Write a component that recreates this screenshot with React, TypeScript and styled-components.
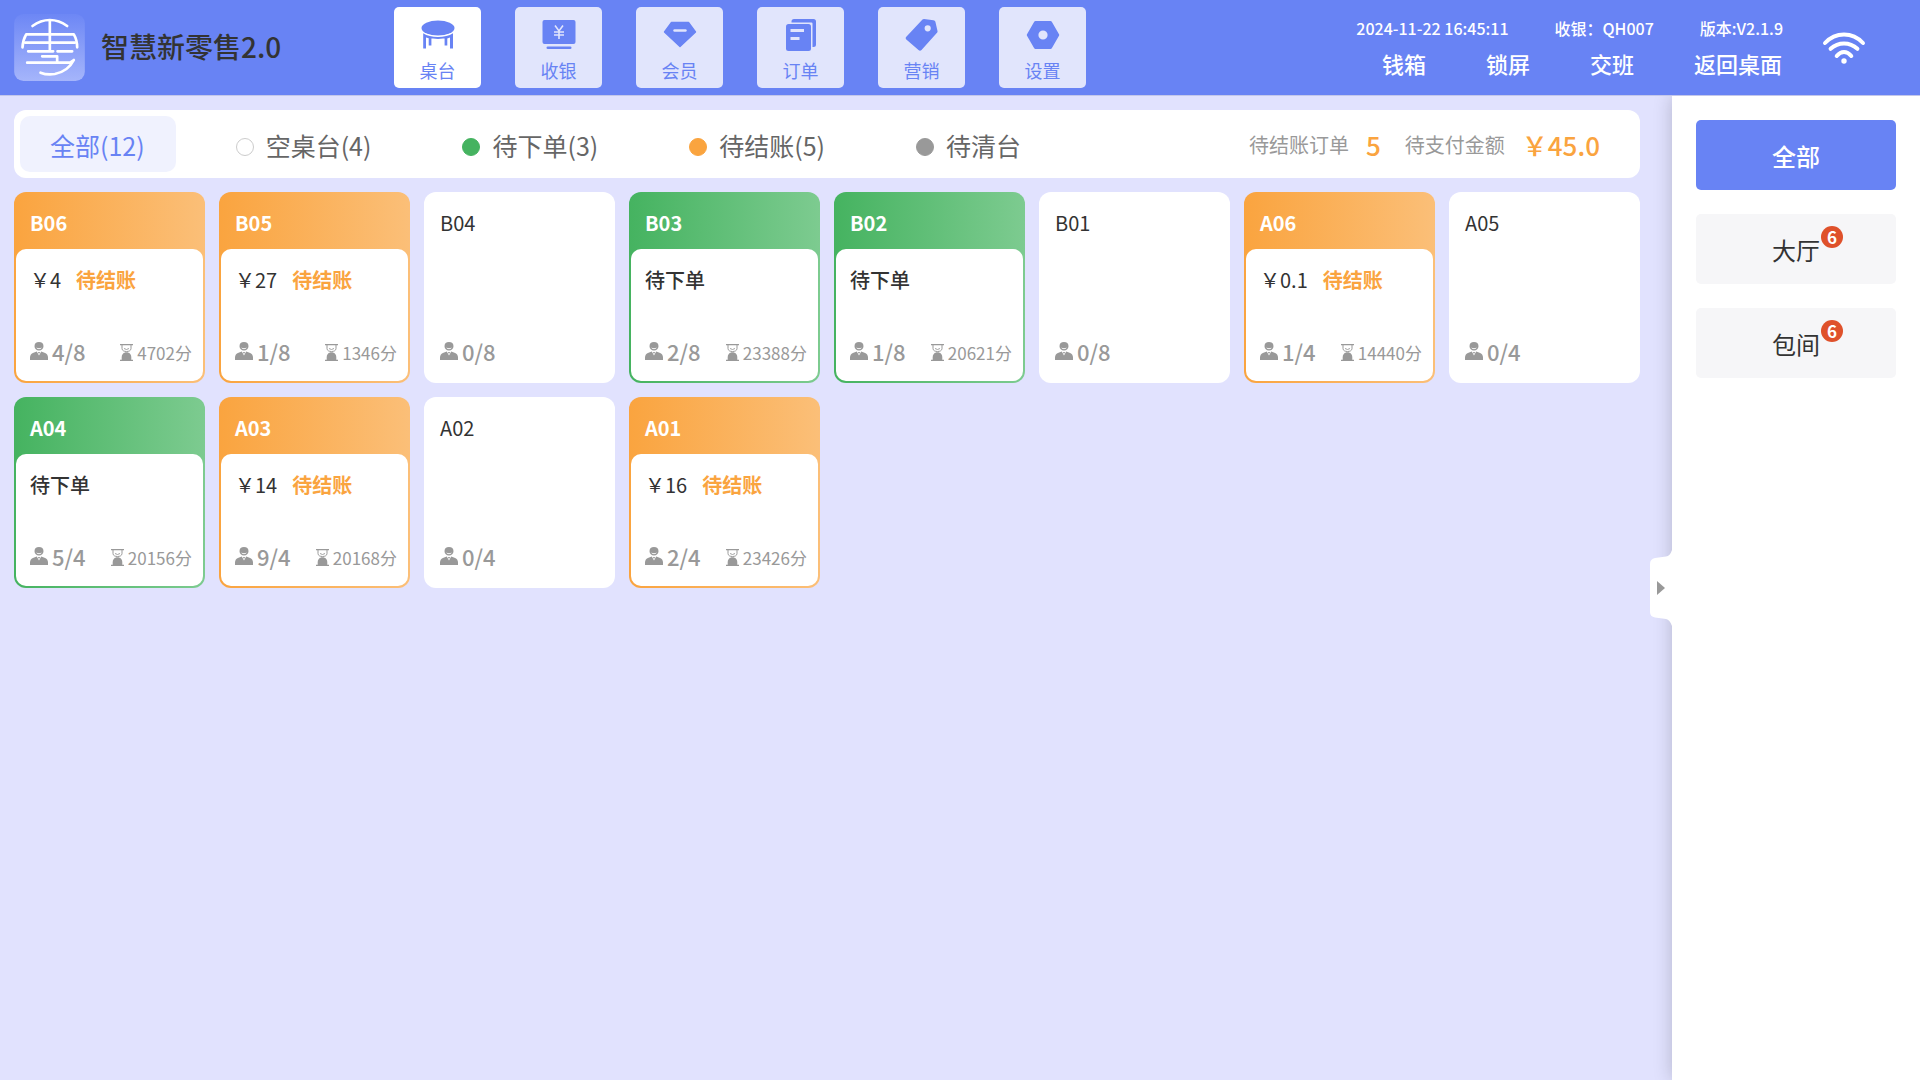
import React, { useState } from "react";
import styled, { createGlobalStyle } from "styled-components";

const color = {
  brand: "#6883f4",
  page: "#e1e2fe",
  navIdle: "#e1e5fc",
  orange: "#faa43f",
  green: "#45b360",
  gray: "#999999",
  text: "#333333",
};

const GlobalStyle = createGlobalStyle`
  *, *::before, *::after { box-sizing: border-box; }
  body {
    margin: 0;
    background: ${color.page};
    color: ${color.text};
    font-family: "Noto Sans CJK SC", "Noto Sans", sans-serif;
  }
  button {
    border: 0;
    padding: 0;
    background: none;
    color: inherit;
    font: inherit;
    cursor: pointer;
  }
  svg { display: block; flex: none; }
`;

const Page = styled.div`
  display: flex;
  flex-direction: column;
  min-height: 100vh;
`;

/* ---------- header ---------- */

const Header = styled.header`
  display: flex;
  align-items: center;
  height: 96px;
  padding: 0 54px 0 14px;
  background: ${color.brand};
  border-bottom: 1px solid #c3c7ea;
`;

const Brand = styled.div`
  display: flex;
  align-items: center;
  gap: 16px;
  flex: 0 0 380px;
`;

const BrandName = styled.h1`
  margin: 0;
  padding-bottom: 4px;
  font-size: 28px;
  line-height: 40px;
  font-weight: 500;
  white-space: nowrap;
`;

const Nav = styled.nav`
  display: flex;
  gap: 34px;
`;

const NavButton = styled.button<{ $active: boolean }>`
  display: flex;
  flex-direction: column;
  align-items: center;
  justify-content: space-between;
  width: 87px;
  height: 81px;
  padding: 10px 0 5px;
  border-radius: 5px;
  background: ${(p) => (p.$active ? "#ffffff" : color.navIdle)};
  color: ${color.brand};
  font-size: 18px;
  line-height: 26px;
`;

const Status = styled.div`
  display: flex;
  align-items: center;
  gap: 39px;
  margin-left: auto;
  color: #ffffff;
`;

const StatusLines = styled.div`
  display: flex;
  flex-direction: column;
  gap: 7px;
`;

const InfoLine = styled.div`
  display: flex;
  justify-content: flex-end;
  gap: 46px;
  font-size: 16px;
  line-height: 24px;
  font-weight: 500;
  white-space: nowrap;
`;

const ActionLine = styled.div`
  display: flex;
  justify-content: flex-end;
  gap: 60px;
  padding-right: 1px;
`;

const ActionButton = styled.button`
  font-size: 22px;
  line-height: 32px;
  font-weight: 500;
  white-space: nowrap;
`;

/* ---------- body ---------- */

const Body = styled.div`
  display: flex;
  flex: 1;
`;

const Main = styled.main`
  flex: 1;
  min-width: 0;
  padding: 14px 32px 14px 14px;
`;

const FilterBar = styled.div`
  display: flex;
  align-items: center;
  justify-content: space-between;
  min-height: 68px;
  padding: 6px 40px 6px 6px;
  border-radius: 12px;
  background: #ffffff;
`;

const Filters = styled.div`
  display: flex;
  gap: 30px;
`;

const FilterButton = styled.button<{ $active: boolean }>`
  display: flex;
  align-items: center;
  gap: 12px;
  height: 56px;
  padding: 1px 31px 0 30px;
  border-radius: 10px;
  background: ${(p) => (p.$active ? "#f0f2fe" : "transparent")};
  color: ${(p) => (p.$active ? color.brand : "#666666")};
  font-size: 25px;
  line-height: 36px;
  white-space: nowrap;
`;

const Dot = styled.span<{ $fill: string; $edge: string }>`
  width: 18px;
  height: 18px;
  margin-top: 4px;
  border: 1px solid ${(p) => p.$edge};
  border-radius: 50%;
  background: ${(p) => p.$fill};
`;

const Summary = styled.dl`
  display: flex;
  gap: 24px;
  margin: 0;
  padding-top: 2px;
  white-space: nowrap;
`;

const SummaryItem = styled.div`
  display: flex;
  align-items: center;
  gap: 17px;
`;

const SummaryLabel = styled.dt`
  color: ${color.gray};
  font-size: 20px;
  line-height: 36px;
`;

const SummaryValue = styled.dd`
  margin: 0;
  color: ${color.orange};
  font-size: 26px;
  line-height: 36px;
  font-weight: 500;
`;

/* ---------- table cards ---------- */

type State = "empty" | "ordering" | "paying";

const cardFill: Record<State, string> = {
  empty: "#ffffff",
  ordering: "linear-gradient(90deg, #45b360, #7dcb90)",
  paying: "linear-gradient(90deg, #faa43f, #fbbf78)",
};

const TableGrid = styled.div`
  display: grid;
  grid-template-columns: repeat(auto-fill, minmax(180px, 1fr));
  gap: 14px;
  margin-top: 14px;
`;

const Card = styled.button<{ $state: State }>`
  display: flex;
  flex-direction: column;
  aspect-ratio: 1;
  padding: 0 2px 2px;
  border-radius: 12px;
  background: ${(p) => cardFill[p.$state]};
  text-align: left;
  white-space: nowrap;
`;

const CardTitle = styled.span<{ $state: State }>`
  height: 57px;
  padding: 15px 14px 0;
  color: ${(p) => (p.$state === "empty" ? color.text : "#ffffff")};
  font-size: 20px;
  line-height: 32px;
  font-weight: ${(p) => (p.$state === "empty" ? 400 : 700)};
`;

const CardBody = styled.span`
  display: flex;
  flex: 1;
  flex-direction: column;
  justify-content: space-between;
  padding: 15px 11px 14px 14px;
  border-radius: 10px;
  background: #ffffff;
`;

const CardLine = styled.span`
  display: flex;
  gap: 15px;
  font-size: 20px;
  line-height: 32px;
`;

const Ordering = styled.span`
  font-weight: 500;
`;

const Unpaid = styled.span`
  color: ${color.orange};
  font-weight: 700;
`;

const CardFooter = styled.span`
  display: flex;
  align-items: center;
  justify-content: space-between;
  color: ${color.gray};
`;

const Seats = styled.span`
  display: flex;
  align-items: center;
  gap: 4px;
  font-size: 22px;
  line-height: 32px;
  font-weight: 500;
`;

const Duration = styled.span`
  display: flex;
  align-items: center;
  gap: 4px;
  padding-top: 3px;
  font-size: 17px;
  line-height: 29px;
`;

/* ---------- sidebar ---------- */

const Sidebar = styled.aside`
  position: relative;
  display: flex;
  flex-direction: column;
  gap: 24px;
  flex: 0 0 248px;
  padding: 24px;
  background: #ffffff;
  box-shadow: 0 0 18px rgba(0, 0, 0, 0.2);
  clip-path: inset(0 0 0 -40px);
`;

const AreaButton = styled.button<{ $active: boolean }>`
  height: 70px;
  padding-top: 2px;
  border-radius: 5px;
  background: ${(p) => (p.$active ? color.brand : "#f6f6f8")};
  color: ${(p) => (p.$active ? "#ffffff" : color.text)};
  font-size: 24px;
  line-height: 36px;
  font-weight: ${(p) => (p.$active ? 500 : 400)};
`;

const AreaLabel = styled.span`
  position: relative;
`;

const Badge = styled.span`
  position: absolute;
  left: calc(100% + 1px);
  top: -6px;
  width: 22px;
  height: 22px;
  border-radius: 50%;
  background: #df512b;
  color: #ffffff;
  font-size: 17px;
  line-height: 21px;
  font-weight: 700;
  text-align: center;
`;

const Handle = styled.button`
  position: absolute;
  right: 100%;
  top: 454px;
`;

/* ---------- drawings ---------- */

const Logo = () => (
  <svg width="71" height="67" viewBox="43 42 212 201" aria-hidden="true">
    <defs>
      <linearGradient id="logoFill" x1="0" y1="0" x2="0" y2="1">
        <stop offset="0" stopColor="#6d87f5" />
        <stop offset="1" stopColor="#a5b5fb" />
      </linearGradient>
    </defs>
    <rect x="43" y="42" width="212" height="201" rx="28" fill="url(#logoFill)" />
    <g fill="none" stroke="#fff" strokeWidth="8" strokeLinecap="round" strokeLinejoin="round">
      <path d="M98 78Q122 60 150 60T202 78" />
      <path d="M150 62V152" />
      <path d="M68 142Q69 120 79 103H222Q232 120 232 142" />
      <path d="M76 128H225" />
      <path d="M85 154H160M173 154H217" />
      <path d="M127 169H172V187" />
      <path d="M82 188H211L222 180Q205 214 165 222Q142 226 122 218" />
    </g>
  </svg>
);

const TableIcon = () => (
  <svg width="34" height="34" viewBox="0 0 34 34" fill="currentColor" aria-hidden="true">
    <ellipse cx="17" cy="11" rx="16.5" ry="7.5" />
    <path d="M2.2 16.2Q8 20 17 20T32 16.2V31.5H29V20.6Q27.5 21.2 26.3 21.4V28.5H23.6V21.4L22 21.6Q17 22.2 12 21.6L10.4 21.4V28.5H7.7V21.2L5 20.6V31.5H2.2Z" />
  </svg>
);

const CashierIcon = () => (
  <svg width="34" height="34" viewBox="0 0 34 34" aria-hidden="true">
    <rect x="0.5" y="3" width="33" height="24" rx="2" fill="currentColor" />
    <rect x="4.5" y="29.5" width="25" height="2.6" rx="1.3" fill="currentColor" />
    <path d="M13 8.5L17 14L21 8.5M12 15H22M12 18H22M17 14V22" fill="none" stroke="#e1e5fc" strokeWidth="1.6" />
  </svg>
);

const MemberIcon = () => (
  <svg width="34" height="34" viewBox="0 0 34 34" aria-hidden="true">
    <path
      d="M8.5 5.5H25.5L32.5 15L17 29.5L1.5 15Z"
      fill="currentColor"
      stroke="currentColor"
      strokeWidth="1.4"
      strokeLinejoin="round"
    />
    <path d="M11.5 13.5H22.5" stroke="#e1e5fc" strokeWidth="2.4" strokeLinecap="round" />
  </svg>
);

const OrderIcon = () => (
  <svg width="34" height="34" viewBox="0 0 34 34" aria-hidden="true">
    <path d="M7.5 4.5Q7.5 2 10 2H29.5Q32 2 32 4.5V27.5Q32 30 29.5 30H28.5V6.5Q28.5 5.5 27.5 5.5H7.5Z" fill="currentColor" />
    <rect x="2" y="7" width="25" height="27" rx="2.5" fill="currentColor" />
    <path d="M6.5 13.5H20M6.5 21.5H15.5" stroke="#e1e5fc" strokeWidth="3" />
  </svg>
);

const MarketingIcon = () => (
  <svg width="34" height="34" viewBox="0 0 34 34" aria-hidden="true">
    <path
      fillRule="evenodd"
      d="M17.5 2.5Q18 2 19 2L28.5 3.2Q30 3.4 30.4 4.8L32.5 14Q32.7 15 32 15.8L16.5 33Q15 34.5 13.5 33L1.3 22.5Q0 21 1.3 19.7ZM22.7 8.2A3.1 3.1 0 1 0 22.7 14.4A3.1 3.1 0 1 0 22.7 8.2Z"
      fill="currentColor"
    />
  </svg>
);

const SettingsIcon = () => (
  <svg width="34" height="34" viewBox="0 0 34 34" aria-hidden="true">
    <path
      fillRule="evenodd"
      d="M9.5 4H24.5Q25.3 4 25.8 4.8L33 17.2Q33.5 18 33 18.8L25.8 31.2Q25.3 32 24.5 32H9.5Q8.7 32 8.2 31.2L1 18.8Q0.5 18 1 17.2L8.2 4.8Q8.7 4 9.5 4ZM17 13.4A4.6 4.6 0 1 0 17 22.6A4.6 4.6 0 1 0 17 13.4Z"
      fill="currentColor"
    />
  </svg>
);

const WifiIcon = () => (
  <svg width="44" height="32" viewBox="0 0 44 32" fill="none" stroke="#fff" strokeWidth="4" strokeLinecap="round" aria-hidden="true">
    <path d="M3 11Q11 2.5 22 2.5T41 11" />
    <path d="M8.6 16.8Q14.5 11.5 22 11.5T35.4 16.8" />
    <path d="M14.7 24Q18 20 22 20T29.3 24" />
    <circle cx="22" cy="29" r="2.7" fill="#fff" stroke="none" />
  </svg>
);

const PersonIcon = () => (
  <svg width="18" height="18" viewBox="0 0 18 18" fill="currentColor" aria-hidden="true">
    <path
      d="M9 0A4.5 4.3 0 0 1 13.5 4.2C13.5 6.6 11.5 8.6 9 8.6S4.5 6.6 4.5 4.2A4.5 4.3 0 0 1 9 0ZM6.2 5.4Q7 7.2 9 7.2T11.8 5.4Q10.5 6.2 9 6.2T6.2 5.4Z"
      fillRule="evenodd"
    />
    <path d="M0 18V15.5Q0 12 3.5 10.7L6.8 9.5L9 13.5L11.2 9.5L14.5 10.7Q18 12 18 15.5V18Z" />
    <path d="M8 10H10L9.5 11.5H8.5Z" />
  </svg>
);

const HourglassIcon = () => (
  <svg width="13" height="17" viewBox="0 0 13 17" aria-hidden="true">
    <path d="M0 0.6H13M0 16.4H13" stroke="currentColor" strokeWidth="1.2" />
    <path d="M2 1V4.5C2 6.6 4 7.5 6.5 7.5S11 6.6 11 4.5V1" fill="none" stroke="currentColor" />
    <path d="M4 4.5Q6.5 6.5 9 4.5" fill="none" stroke="currentColor" strokeWidth="0.9" />
    <path d="M1.7 16V13.5C1.7 10.5 3.5 8.3 6.5 8.3S11.3 10.5 11.3 13.5V16Z" fill="currentColor" />
  </svg>
);

const HandleShape = () => (
  <svg width="22" height="76" viewBox="0 0 22 76" aria-hidden="true">
    <path d="M22 0Q20 6 16 6.5L5 8Q0 9 0 14V62Q0 66.5 5 67.5L16 69Q20 70 22 76Z" fill="#fff" />
    <path d="M7 31L15 38L7 45Z" fill="#999" />
  </svg>
);

/* ---------- data ---------- */

const navItems = [
  { label: "桌台", Icon: TableIcon },
  { label: "收银", Icon: CashierIcon },
  { label: "会员", Icon: MemberIcon },
  { label: "订单", Icon: OrderIcon },
  { label: "营销", Icon: MarketingIcon },
  { label: "设置", Icon: SettingsIcon },
];

const actions = ["钱箱", "锁屏", "交班", "返回桌面"];

const filters = [
  { label: "全部(12)" },
  { label: "空桌台(4)", fill: "#ffffff", edge: "#cccccc" },
  { label: "待下单(3)", fill: color.green, edge: color.green },
  { label: "待结账(5)", fill: color.orange, edge: color.orange },
  { label: "待清台", fill: color.gray, edge: color.gray },
];

interface Table {
  name: string;
  state: State;
  seats: string;
  amount?: string;
  minutes?: number;
}

const tables: Table[] = [
  { name: "B06", state: "paying", seats: "4/8", amount: "4", minutes: 4702 },
  { name: "B05", state: "paying", seats: "1/8", amount: "27", minutes: 1346 },
  { name: "B04", state: "empty", seats: "0/8" },
  { name: "B03", state: "ordering", seats: "2/8", minutes: 23388 },
  { name: "B02", state: "ordering", seats: "1/8", minutes: 20621 },
  { name: "B01", state: "empty", seats: "0/8" },
  { name: "A06", state: "paying", seats: "1/4", amount: "0.1", minutes: 14440 },
  { name: "A05", state: "empty", seats: "0/4" },
  { name: "A04", state: "ordering", seats: "5/4", minutes: 20156 },
  { name: "A03", state: "paying", seats: "9/4", amount: "14", minutes: 20168 },
  { name: "A02", state: "empty", seats: "0/4" },
  { name: "A01", state: "paying", seats: "2/4", amount: "16", minutes: 23426 },
];

const areas = [
  { label: "全部" },
  { label: "大厅", count: 6 },
  { label: "包间", count: 6 },
];

const TableCard = ({ name, state, seats, amount, minutes }: Table) => (
  <Card type="button" $state={state}>
    <CardTitle $state={state}>{name}</CardTitle>
    <CardBody>
      <CardLine>
        {state === "paying" && (
          <>
            <span>￥{amount}</span>
            <Unpaid>待结账</Unpaid>
          </>
        )}
        {state === "ordering" && <Ordering>待下单</Ordering>}
      </CardLine>
      <CardFooter>
        <Seats>
          <PersonIcon />
          {seats}
        </Seats>
        {minutes !== undefined && (
          <Duration>
            <HourglassIcon />
            {minutes}分
          </Duration>
        )}
      </CardFooter>
    </CardBody>
  </Card>
);

export default function App() {
  const [nav, setNav] = useState("桌台");
  const [filter, setFilter] = useState("全部(12)");
  const [area, setArea] = useState("全部");

  return (
    <Page>
      <GlobalStyle />
      <Header>
        <Brand>
          <Logo />
          <BrandName>智慧新零售2.0</BrandName>
        </Brand>
        <Nav>
          {navItems.map(({ label, Icon }) => (
            <NavButton key={label} type="button" $active={nav === label} onClick={() => setNav(label)}>
              <Icon />
              {label}
            </NavButton>
          ))}
        </Nav>
        <Status>
          <StatusLines>
            <InfoLine>
              <span>2024-11-22 16:45:11</span>
              <span>收银：QH007</span>
              <span>版本:V2.1.9</span>
            </InfoLine>
            <ActionLine>
              {actions.map((label) => (
                <ActionButton key={label} type="button">
                  {label}
                </ActionButton>
              ))}
            </ActionLine>
          </StatusLines>
          <WifiIcon />
        </Status>
      </Header>
      <Body>
        <Main>
          <FilterBar>
            <Filters>
              {filters.map(({ label, fill, edge }) => (
                <FilterButton key={label} type="button" $active={filter === label} onClick={() => setFilter(label)}>
                  {fill && edge && <Dot $fill={fill} $edge={edge} />}
                  {label}
                </FilterButton>
              ))}
            </Filters>
            <Summary>
              <SummaryItem>
                <SummaryLabel>待结账订单</SummaryLabel>
                <SummaryValue>5</SummaryValue>
              </SummaryItem>
              <SummaryItem>
                <SummaryLabel>待支付金额</SummaryLabel>
                <SummaryValue>￥45.0</SummaryValue>
              </SummaryItem>
            </Summary>
          </FilterBar>
          <TableGrid>
            {tables.map((table) => (
              <TableCard key={table.name} {...table} />
            ))}
          </TableGrid>
        </Main>
        <Sidebar>
          {areas.map(({ label, count }) => (
            <AreaButton key={label} type="button" $active={area === label} onClick={() => setArea(label)}>
              <AreaLabel>
                {label}
                {count && <Badge>{count}</Badge>}
              </AreaLabel>
            </AreaButton>
          ))}
          <Handle type="button" aria-label="收起">
            <HandleShape />
          </Handle>
        </Sidebar>
      </Body>
    </Page>
  );
}
